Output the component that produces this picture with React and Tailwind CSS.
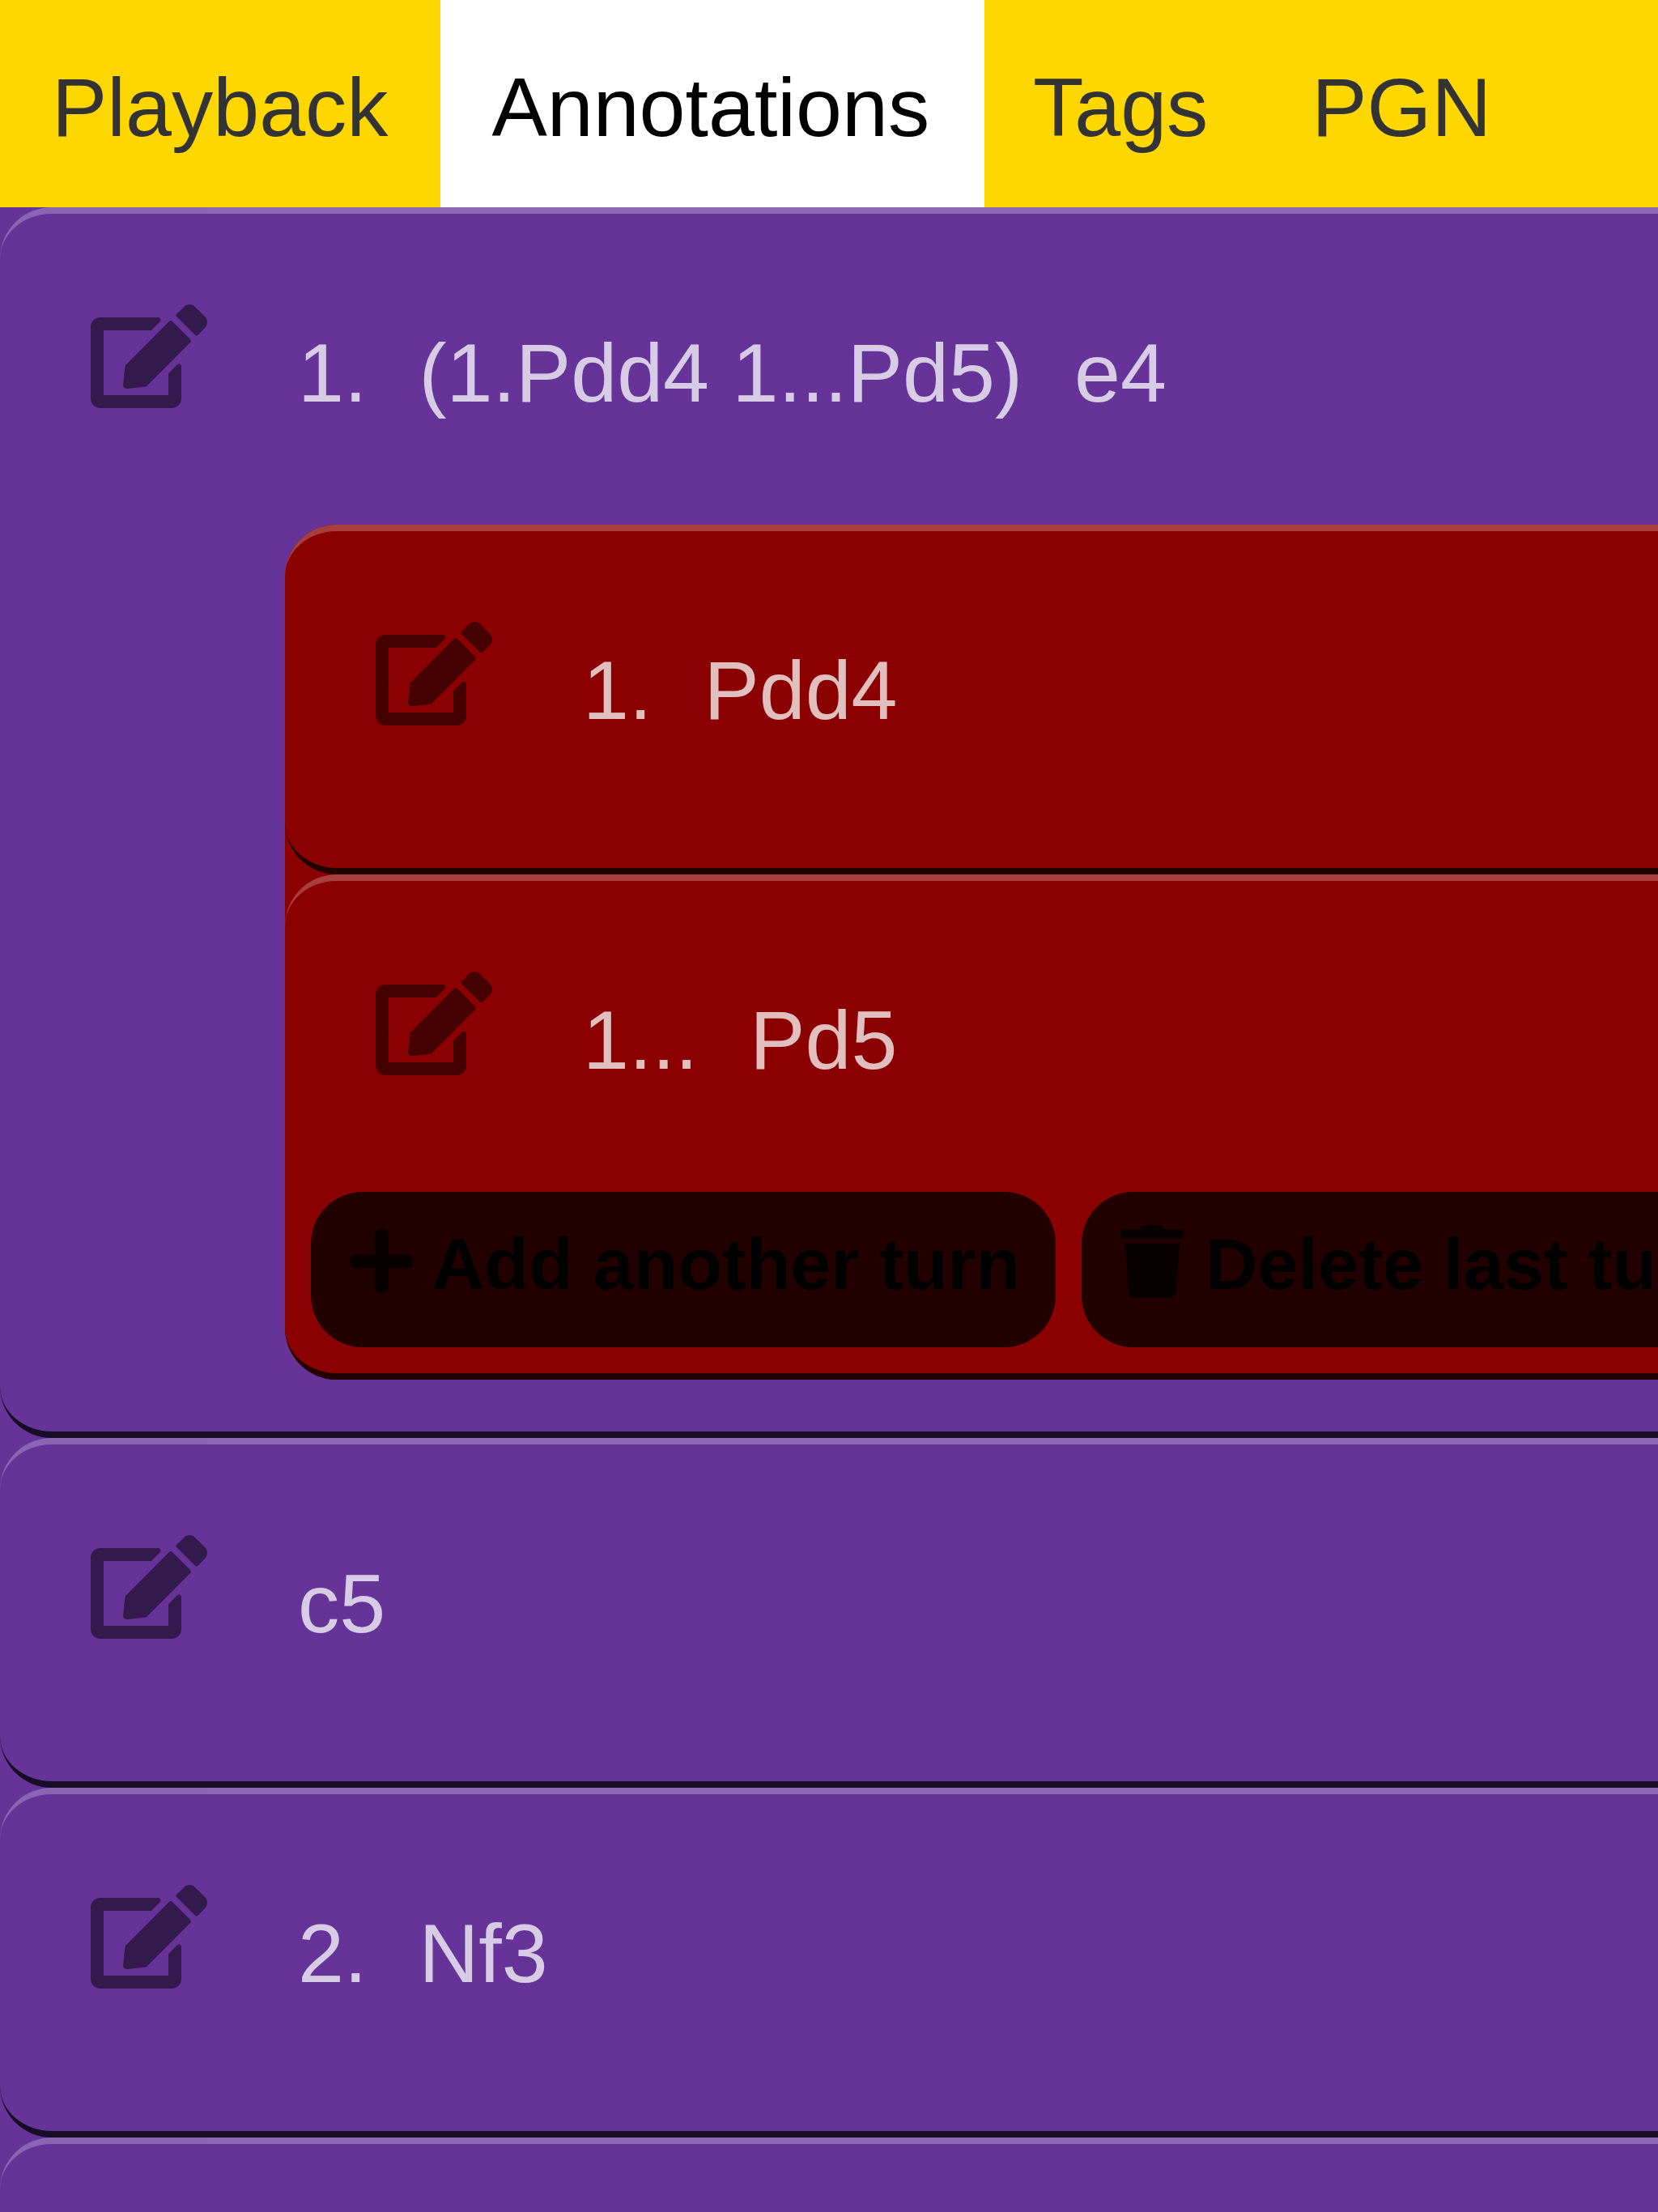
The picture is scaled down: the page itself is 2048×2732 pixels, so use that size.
import React from "react";
import { FaEdit, FaPlus, FaTrash } from "react-icons/fa";

function Tab({ children, className }) {
  return (
    <div className={`h-[256px] shrink-0 pt-[75px] pl-[64px] leading-[115px] ${className}`}>
      {children}
    </div>
  );
}

function Header({ parts, iconClass }) {
  return (
    <div className="flex h-[384px] items-start whitespace-nowrap pl-[112px]">
      <FaEdit className={`mt-[112px] mr-[112px] h-[128px] w-[144px] shrink-0 ${iconClass}`} />
      <div className="flex gap-[64px] pt-[139px] leading-[115px] text-white/75">
        {parts.map((part, i) => (
          <span key={i}>{part}</span>
        ))}
      </div>
    </div>
  );
}

function Card({ parts, className, children }) {
  return (
    <div
      className={`rounded-[64px] border-t-8 border-b-8 border-t-white/25 border-b-black/75 ${className}`}
    >
      <Header parts={parts} iconClass="text-black/50" />
      {children}
    </div>
  );
}

function ActionButton({ icon: Icon, className, children }) {
  return (
    <button
      className={`flex h-[192px] shrink-0 items-start whitespace-nowrap rounded-[64px] bg-black/75 pl-[48px] text-[89.6px] font-bold leading-[100px] text-black ${className}`}
    >
      <Icon className="mt-[41.4px] h-[89.6px] w-[78.4px] shrink-0 text-black/75" />
      <span className="mt-[39px]">{children}</span>
    </button>
  );
}

export default function App() {
  return (
    <div className="h-[2732px] w-[2048px] overflow-hidden bg-[#663399] font-['Liberation_Sans',Arial,sans-serif] text-[102.4px]">
      <nav className="flex h-[256px] bg-[#ffd700] text-[#333333]">
        <Tab className="w-[544px]">Playback</Tab>
        <Tab className="-mr-[4px] w-[672px] bg-white text-black">
          <span className="-ml-[0.6px]">Annotations</span>
        </Tab>
        <Tab className="pr-[64px]">Tags</Tab>
        <Tab className="pr-[64px]">PGN</Tab>
      </nav>
      <main className="w-[2900px]">
        <Card parts={["1.", "(1.Pdd4 1...Pd5)", "e4"]} className="bg-[#663399] pb-[64px]">
          <div className="ml-[352px] rounded-[64px] bg-[#8b0000]">
            <Card parts={["1.", "Pdd4"]} className="bg-[#8b0000] pb-[32px]" />
            <Card parts={["1...", "Pd5"]} className="bg-[#8b0000] pb-[32px]">
              <div className="flex gap-[32px] pl-[32px]">
                <ActionButton icon={FaPlus} className="w-[920px] gap-[23.2px]">
                  Add another turn
                </ActionButton>
                <ActionButton icon={FaTrash} className="gap-[26.3px] pr-[48px]">
                  Delete last turn
                </ActionButton>
              </div>
            </Card>
          </div>
        </Card>
        <Card parts={["c5"]} className="bg-[#663399] pb-[32px]" />
        <Card parts={["2.", "Nf3"]} className="bg-[#663399] pb-[32px]" />
        <Card parts={[]} className="bg-[#663399] pb-[32px]" />
      </main>
    </div>
  );
}
